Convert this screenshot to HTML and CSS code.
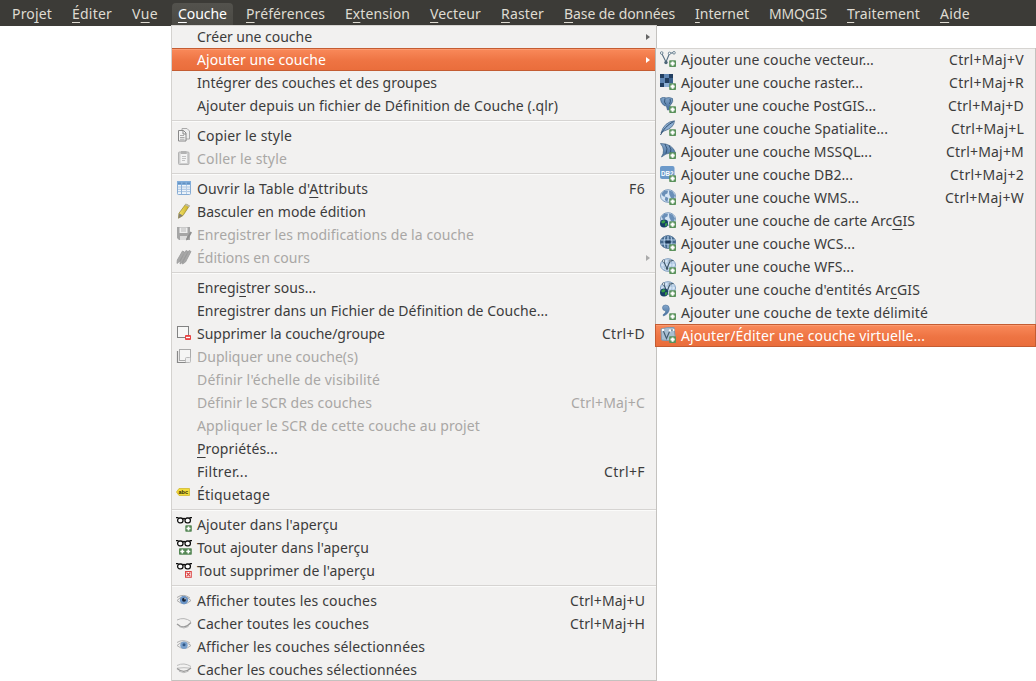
FILE: index.html
```html
<!DOCTYPE html>
<html lang="fr">
<head>
<meta charset="utf-8">
<title>QGIS</title>
<link rel="stylesheet" href="styles.css">
</head>
<body>
<svg class="defs" aria-hidden="true">
  <defs>
    <linearGradient id="blue" x1="0" y1="0" x2="0" y2="1"><stop offset="0" stop-color="#86a8cc"/><stop offset="1" stop-color="#426c9b"/></linearGradient>
    <linearGradient id="gold" x1="0" y1="0" x2="1" y2="0"><stop offset="0" stop-color="#f4e56a"/><stop offset="1" stop-color="#c9ac25"/></linearGradient>
    <g id="plus"><rect x="9.200" y="9.200" width="6.800" height="6.800" rx=".8" fill="#5b925c"/><path d="M12.600 10.500v4.200M10.500 12.600h4.200" stroke="#fff" stroke-width="2"/></g>
    <g id="globe"><ellipse cx="8" cy="7" rx="7.500" ry="6.300" fill="#d6e5f5" stroke="#7f9dbe"/></g>
    <g id="lands"><path d="M1.500 4.500l3-3 3.500.3-.6 2.700-2 .7L4.500 8 2.500 6.800zM9 1.500l3.500 1 2.500 4-1.500 3.500-2.500-1L9.300 5.500zM5.500 7.500l2.800 1.500-1 4-2.500-2z" fill="#6a8fb8"/></g>
    <g id="earth"><circle cx="4" cy="11.500" r="4" fill="#173f68"/><path d="M1 10l2.500-2 2 1-1 2-2 .5zM5 11.500l2.500-.5-1 3-1.500.5z" fill="#38a045"/></g>
    <g id="grid"><path d="M1 5h14M1 9h14M8 1v12M5 1.500q-2 5 0 11M11 1.500q2 5 0 11" fill="none" stroke="#9ebbd8" stroke-width=".8"/></g>
    <g id="vee"><path d="M3.500 3L7 10.500 10 3 13.500 2.500" fill="none" stroke="#3e5668" stroke-width="1.100"/><circle cx="3.500" cy="3" r="1.200" fill="#fff" stroke="#3e5668" stroke-width=".7"/><circle cx="10" cy="3" r="1" fill="#fff" stroke="#3e5668" stroke-width=".7"/><circle cx="7" cy="10.500" r="1.200" fill="#3e5668"/></g>
    <g id="glasses" fill="#fff" stroke="#111" stroke-width="1.300"><path d="M0 1.600h2.500M13.500 1.600H16" fill="none"/><rect x="1.600" y="2" width="5.400" height="4.800" rx="2.200"/><rect x="9" y="2" width="5.400" height="4.800" rx="2.200"/><path d="M6.500 3q1.500-1 3 0" fill="none"/></g>

    <symbol id="copy" viewBox="0 0 16 16"><path d="M6 1.500h5l2.500 2.500v8H6z" fill="#eee" stroke="#aaa"/><path d="M2.500 3.500h5l2.500 2.500v8H2.500z" fill="#f3f3f3" stroke="#888"/><path d="M7 3.500V7h3" fill="none" stroke="#888"/><path d="M4 8.500h4M4 10.500h4.500M4 12.200h4.500" stroke="#aaa"/></symbol>
    <symbol id="paste" viewBox="0 0 16 16"><rect x="2.500" y="2" width="10.500" height="12.500" rx="1" fill="#cfcfcf" stroke="#b3b3b3"/><path d="M4.500 4h6.500v9H4.500z" fill="#f3f3f3"/><path d="M5 1h5.500v3H5z" fill="#b3b3b3"/><path d="M6 6.500h4M6 8.500h4M6 10.500h3" stroke="#c2c2c2"/></symbol>
    <symbol id="table" viewBox="0 0 16 16"><rect x="1.500" y="1.500" width="13" height="13" rx=".8" fill="#eef4fa" stroke="#86acd4"/><path d="M1 1h14v4H1z" fill="#82aedb"/><path d="M2 3.200h3M6.500 3.200h3M11 3.200h3" stroke="#5583b5"/><path d="M2 7h12M2 9.300h12M2 11.600h12" stroke="#a9c4e1"/><path d="M5.500 5v9" stroke="#8fb2d8"/><path d="M10.500 5v9" stroke="#b5cce5"/></symbol>
    <symbol id="pencil" viewBox="0 0 16 16"><path d="M9.800 1l3.600 1.800L7 12.500l-4.500 2.700.5-5z" fill="url(#gold)" stroke="#94852e" stroke-width=".7"/><path d="M3 10.200l3.800 2.200-4.500 3z" fill="#858075"/><path d="M9.800.8l3.800 1.900-.9 1.400-3.800-2z" fill="#b9b9b2"/></symbol>
    <symbol id="save" viewBox="0 0 16 16"><path d="M1 1h13v13H3l-2-2z" fill="#a6a6a6"/><path d="M3.500 1.500h8v5.500h-8z" fill="#eee"/><path d="M4 10h7v4H4z" fill="#ddd"/><path d="M14.500 5.500l1.500 1-4 7-2 1 .2-2z" fill="#8e8e8e"/><path d="M5 3h5M5 5h5" stroke="#bbb"/></symbol>
    <symbol id="pencils" viewBox="0 0 16 16"><path d="M6.500 2l2 1-4.500 9-3 2.500.3-3.500zM10 1.500l2 1-5 10.500-3 2 .2-3.500zM13 1.500l2 1-5.500 10.500-3 2 .4-3z" fill="#a8a8a8" stroke="#999" stroke-width=".8"/></symbol>
    <symbol id="remove" viewBox="0 0 16 16"><rect x="1.500" y="1.500" width="11" height="11" fill="#f7f7f6" stroke="#828282"/><rect x="9" y="10" width="6" height="5" rx="1" fill="#e84343"/><path d="M10 12.500h4" stroke="#fff" stroke-width="1.300"/></symbol>
    <symbol id="duplicate" viewBox="0 0 16 16"><path d="M1.500 3v11.500H13" fill="none" stroke="#888" stroke-width="1.200"/><rect x="3.500" y="1.500" width="11" height="11" fill="#f5f5f4" stroke="#aaa"/><rect x="9.500" y="9.500" width="5" height="5" rx="1" fill="#eee" stroke="#bbb"/></symbol>
    <symbol id="label" viewBox="0 0 16 16"><path d="M.5 6L3 2.500h10.500V9.500H3z" fill="#f1dc3b" stroke="#d2b92f" stroke-width=".8"/><text x="2.500" y="8" class="abc">abc</text></symbol>
    <symbol id="ov-add" viewBox="0 0 16 16"><use href="#glasses"/><rect x="9.300" y="9.300" width="6.500" height="6.500" rx=".8" fill="#548654"/><path d="M12.500 10.500v4M10.500 12.500h4" stroke="#fff" stroke-width="1.700"/></symbol>
    <symbol id="ov-all" viewBox="0 0 16 16"><use href="#glasses"/><rect x="3" y="9.300" width="12.800" height="6.500" rx=".8" fill="#548654"/><path d="M6.300 10.500v4M4.300 12.500h4M12.300 10.500v4M10.300 12.500h4" stroke="#fff" stroke-width="1.600"/></symbol>
    <symbol id="ov-del" viewBox="0 0 16 16"><use href="#glasses"/><rect x="9.500" y="9.500" width="5.800" height="5.800" fill="#fff" stroke="#dc4646"/><path d="M10.500 10.500l3.800 3.800M14.300 10.500l-3.800 3.800" stroke="#dc4646" stroke-width="1.200"/></symbol>
    <symbol id="eye" viewBox="0 0 16 16"><path d="M1 8.500q6.500-7.500 14 0-7 6.500-14 0z" fill="#eee" stroke="#aaa"/><circle cx="8" cy="8" r="4.200" fill="#6c96c8"/><circle cx="8" cy="7.700" r="2" fill="#182335"/><circle cx="9" cy="6.700" r=".7" fill="#fff"/><path d="M1 5.500q6-4.500 13 .5" fill="none" stroke="#aaa"/></symbol>
    <symbol id="eye-sel" viewBox="0 0 16 16"><path d="M1 7.500q6.500-6.500 14 0-7 6-14 0z" fill="#eee" stroke="#b0b0b0"/><circle cx="8" cy="7.300" r="3.700" fill="#79a0cc"/><circle cx="8" cy="6.800" r="1.500" fill="#315989"/><path d="M1 4.500q6-4 13 .5" fill="none" stroke="#b0b0b0"/></symbol>
    <symbol id="closed" viewBox="0 0 16 16"><path d="M1 5q7-3.500 14 1.500" fill="none" stroke="#b5b5b5"/><path d="M1 9q7 6.500 14-1.500" fill="none" stroke="#999" stroke-width="1.200"/><path d="M3 11.500q5 3 9.500 0" fill="none" stroke="#bbb"/></symbol>
    <symbol id="closed-sel" viewBox="0 0 16 16"><path d="M1 4.500q7-3.500 14 1M1 7.200q7-1 14 0" fill="none" stroke="#bdbdbd"/><path d="M1 7.500q7 6 14-.5" fill="none" stroke="#999" stroke-width="1.200"/><path d="M3 10.200q5 3 9.500 0" fill="none" stroke="#bbb"/></symbol>

    <symbol id="vector" viewBox="0 0 16 16"><path d="M1.500 2L6 11 9.500 2.500 14 1.500" fill="none" stroke="#566f82" stroke-width="1.100"/><g fill="#fff" stroke="#566f82" stroke-width=".8"><circle cx="1.700" cy="2" r="1.300"/><circle cx="9.500" cy="2.300" r="1.200"/><circle cx="14" cy="1.800" r="1.300"/></g><circle cx="6" cy="11.500" r="1.700" fill="#4d6678"/><use href="#plus"/></symbol>
    <symbol id="raster" viewBox="0 0 16 16"><path d="M0 0h13v13H0z" fill="#6d98c7"/><path d="M0 0h4v4H0zM9 0h4v4H9zM0 9h4v4H0zM5 4h4v5H5z" fill="#223f61"/><path d="M4 0h5v4H4zM0 4h5v5H0z" fill="#6087b4"/><path d="M9 4h4v5H9z" fill="#3d638d"/><path d="M4 9h5v4H4z" fill="#8dafd4"/><use href="#plus"/></symbol>
    <symbol id="postgis" viewBox="0 0 16 16"><path d="M.5 1.500q3-2 5.500-.5 3-1 6.500.5 1 3-1.500 6L10 8v4.500l-2.500.5-1-4L4 8.500Q.5 6 .5 1.500z" fill="url(#blue)" stroke="#46698e" stroke-width=".8"/><path d="M5 1.500q-1.500 4 1 6M10 2q1 2-.5 5" fill="none" stroke="#365879"/><use href="#plus"/></symbol>
    <symbol id="feather" viewBox="0 0 16 16"><path d="M1 13Q4 2 14.500 .8 14 8 4 11z" fill="#8eafd3" stroke="#49698b" stroke-width=".8"/><path d="M.5 15Q4 7 13.500 1.500" fill="none" stroke="#2e4c6d"/><use href="#plus"/></symbol>
    <symbol id="mssql" viewBox="0 0 16 16"><path d="M.5 .5q12 0 15 9.500l-5 0Q6 10 1.500 14 6 7 .5.5z" fill="url(#blue)" stroke="#3c5e80" stroke-width=".7"/><path d="M5 1q3.500 5 1 9.500M9 2.500q3 3.500 1.500 7.500" fill="none" stroke="#294969" stroke-width=".8"/><use href="#plus"/></symbol>
    <symbol id="db2" viewBox="0 0 16 16"><rect width="14.500" height="13" rx="2" fill="#6d9aca"/><text x="1" y="9.500" class="db2" textLength="12.500" lengthAdjust="spacingAndGlyphs">DB2</text><use href="#plus"/></symbol>
    <symbol id="wms" viewBox="0 0 16 16"><use href="#globe"/><use href="#lands"/><use href="#plus"/></symbol>
    <symbol id="arcmap" viewBox="0 0 16 16"><use href="#globe"/><use href="#lands"/><use href="#earth"/><use href="#plus"/></symbol>
    <symbol id="wcs" viewBox="0 0 16 16"><ellipse cx="8" cy="7" rx="7.500" ry="6.300" fill="#45698e" stroke="#45698e"/><path d="M1 5h14M1 9h14M8 1v12" stroke="#b4cfe9" stroke-width="1.200"/><path d="M5 1.500q-2 5 0 11M11 1.500q2 5 0 11" fill="none" stroke="#b4cfe9"/><path d="M5.500 5.500h5v3h-5z" fill="#1c3857"/><use href="#plus"/></symbol>
    <symbol id="wfs" viewBox="0 0 16 16"><use href="#globe"/><use href="#grid"/><use href="#vee"/><use href="#plus"/></symbol>
    <symbol id="arcfeat" viewBox="0 0 16 16"><use href="#globe"/><use href="#grid"/><use href="#vee"/><use href="#earth"/><use href="#plus"/></symbol>
    <symbol id="comma" viewBox="0 0 16 16"><path d="M2.500 3.800Q2.500 1 5.700 1 9.300 1 9.300 4.800 9.300 9.500 3.500 12L3 10.800Q6 9 5.800 6.800 2.500 6.800 2.500 3.800z" fill="url(#blue)" stroke="#4a719b" stroke-width=".6"/><use href="#plus"/></symbol>
    <symbol id="virtual" viewBox="0 0 16 16"><path d="M1 2q5-2 13-1.500l1.500 12Q8 14.500 1.500 13z" fill="#a9bfd3" stroke="#8099ae"/><path d="M3 3l3.500 8.500L10 3.500 13.500 3" fill="none" stroke="#425a6d" stroke-width="1.100"/><g fill="#fff"><circle cx="3" cy="3" r="1.200"/><circle cx="10" cy="3.500" r="1.200"/><circle cx="13.500" cy="3" r="1"/></g><use href="#plus"/></symbol>
  </defs>
</svg>

<nav class="menubar">
  <span class="top"><span data-w="40">Pro<u>j</u>et</span></span>
  <span class="top"><span data-w="40"><u>É</u>diter</span></span>
  <span class="top"><span data-w="26">V<u>u</u>e</span></span>
  <span class="top open"><span data-w="49"><u>C</u>ouche</span></span>
  <span class="top"><span data-w="79"><u>P</u>références</span></span>
  <span class="top"><span data-w="65">E<u>x</u>tension</span></span>
  <span class="top"><span data-w="51"><u>V</u>ecteur</span></span>
  <span class="top"><span data-w="43"><u>R</u>aster</span></span>
  <span class="top"><span data-w="111"><u>B</u>ase de données</span></span>
  <span class="top"><span data-w="54"><u>I</u>nternet</span></span>
  <span class="top"><span data-w="58">MMQGIS</span></span>
  <span class="top"><span data-w="73"><u>T</u>raitement</span></span>
  <span class="top"><span data-w="30"><u>A</u>ide</span></span>
</nav>

<main class="desk">
  <section class="menu">
    <div class="row"><i class="ico"></i><span data-w="115">Créer une couche</span><b class="arrow"></b></div>
    <div class="row active"><i class="ico"></i><span data-w="129">Ajouter une couche</span><b class="arrow"></b></div>
    <div class="row"><i class="ico"></i><span data-w="240">Intégrer des couches et des groupes</span></div>
    <div class="row"><i class="ico"></i><span data-w="361">Ajouter depuis un fichier de Définition de Couche (.qlr)</span></div>
    <hr class="sep">
    <div class="row"><svg class="ico"><use href="#copy"/></svg><span data-w="95">Copier le style</span></div>
    <div class="row off"><svg class="ico"><use href="#paste"/></svg><span data-w="90">Coller le style</span></div>
    <hr class="sep">
    <div class="row"><svg class="ico"><use href="#table"/></svg><span data-w="171">Ouvrir la Table d'<u>A</u>ttributs</span><kbd class="key" data-w="16">F6</kbd></div>
    <div class="row"><svg class="ico"><use href="#pencil"/></svg><span data-w="169">Basculer en mode édition</span></div>
    <div class="row off"><svg class="ico"><use href="#save"/></svg><span data-w="277">Enregistrer les modifications de la couche</span></div>
    <div class="row off"><svg class="ico"><use href="#pencils"/></svg><span data-w="113">Éditions en cours</span><b class="arrow"></b></div>
    <hr class="sep">
    <div class="row"><i class="ico"></i><span data-w="119">Enregi<u>s</u>trer sous...</span></div>
    <div class="row"><i class="ico"></i><span data-w="351">Enregistrer dans un Fichier de Définition de Couche...</span></div>
    <div class="row"><svg class="ico"><use href="#remove"/></svg><span data-w="188">Supprimer la couche/groupe</span><kbd class="key" data-w="43">Ctrl+D</kbd></div>
    <div class="row off"><svg class="ico"><use href="#duplicate"/></svg><span data-w="161">Dupliquer une couche(s)</span></div>
    <div class="row off"><i class="ico"></i><span data-w="183">Définir l'échelle de visibilité</span></div>
    <div class="row off"><i class="ico"></i><span data-w="175">Définir le SCR des couches</span><kbd class="key" data-w="74">Ctrl+Maj+C</kbd></div>
    <div class="row off"><i class="ico"></i><span data-w="283">Appliquer le SCR de cette couche au projet</span></div>
    <div class="row"><i class="ico"></i><span data-w="81"><u>P</u>ropriétés...</span></div>
    <div class="row"><i class="ico"></i><span data-w="51">Filtrer...</span><kbd class="key" data-w="41">Ctrl+F</kbd></div>
    <div class="row"><svg class="ico"><use href="#label"/></svg><span data-w="73">Étiquetage</span></div>
    <hr class="sep">
    <div class="row"><svg class="ico"><use href="#ov-add"/></svg><span data-w="141">Ajouter dans l'aperçu</span></div>
    <div class="row"><svg class="ico"><use href="#ov-all"/></svg><span data-w="172">Tout ajouter dans l'aperçu</span></div>
    <div class="row"><svg class="ico"><use href="#ov-del"/></svg><span data-w="178">Tout supprimer de l'aperçu</span></div>
    <hr class="sep">
    <div class="row"><svg class="ico"><use href="#eye"/></svg><span data-w="180">Afficher toutes les couches</span><kbd class="key" data-w="75">Ctrl+Maj+U</kbd></div>
    <div class="row"><svg class="ico"><use href="#closed"/></svg><span data-w="172">Cacher toutes les couches</span><kbd class="key" data-w="75">Ctrl+Maj+H</kbd></div>
    <div class="row"><svg class="ico"><use href="#eye-sel"/></svg><span data-w="228">Afficher les couches sélectionnées</span></div>
    <div class="row"><svg class="ico"><use href="#closed-sel"/></svg><span data-w="220">Cacher les couches sélectionnées</span></div>
  </section>

  <section class="menu submenu">
    <div class="row"><svg class="ico"><use href="#vector"/></svg><span data-w="193">Ajouter une couche vecteur...</span><kbd class="key" data-w="75">Ctrl+Maj+V</kbd></div>
    <div class="row"><svg class="ico"><use href="#raster"/></svg><span data-w="182">Ajouter une couche raster...</span><kbd class="key" data-w="75">Ctrl+Maj+R</kbd></div>
    <div class="row"><svg class="ico"><use href="#postgis"/></svg><span data-w="195">Ajouter une couche PostGIS...</span><kbd class="key" data-w="76">Ctrl+Maj+D</kbd></div>
    <div class="row"><svg class="ico"><use href="#feather"/></svg><span data-w="207">Ajouter une couche Spatialite...</span><kbd class="key" data-w="73">Ctrl+Maj+L</kbd></div>
    <div class="row"><svg class="ico"><use href="#mssql"/></svg><span data-w="191">Ajouter une couche MSSQL...</span><kbd class="key" data-w="78">Ctrl+Maj+M</kbd></div>
    <div class="row"><svg class="ico"><use href="#db2"/></svg><span data-w="172">Ajouter une couche DB2...</span><kbd class="key" data-w="74">Ctrl+Maj+2</kbd></div>
    <div class="row"><svg class="ico"><use href="#wms"/></svg><span data-w="178">Ajouter une couche WMS...</span><kbd class="key" data-w="79">Ctrl+Maj+W</kbd></div>
    <div class="row"><svg class="ico"><use href="#arcmap"/></svg><span data-w="234">Ajouter une couche de carte Arc<u>G</u>IS</span></div>
    <div class="row"><svg class="ico"><use href="#wcs"/></svg><span data-w="174">Ajouter une couche WCS...</span></div>
    <div class="row"><svg class="ico"><use href="#wfs"/></svg><span data-w="173">Ajouter une couche WFS...</span></div>
    <div class="row"><svg class="ico"><use href="#arcfeat"/></svg><span data-w="239">Ajouter une couche d'entités Ar<u>c</u>GIS</span></div>
    <div class="row"><svg class="ico"><use href="#comma"/></svg><span data-w="247">Ajouter une couche de texte délimité</span></div>
    <div class="row active"><svg class="ico"><use href="#virtual"/></svg><span data-w="244">Ajouter/Éditer une couche virtuelle...</span></div>
  </section>
</main>
<script src="fit.js"></script>
</body>
</html>
```
FILE: styles.css
```css
* { box-sizing: border-box; }

body {
  margin: 0;
  width: 1036px;
  height: 681px;
  overflow: hidden;
  background: #fff;
  color: #3c3c3c;
  font: 14px/23px "Noto Sans", "Open Sans", sans-serif;
  white-space: nowrap;
}

.defs { position: absolute; width: 0; height: 0; }

u {
  text-decoration: underline 1px;
  text-underline-offset: 3px;
  text-decoration-skip-ink: none;
}

.menubar {
  display: flex;
  height: 26px;
  padding: 3px 0 0 2px;
  background: #3c3b37;
  color: #dfdbd2;
}

.top {
  height: 23px;
  padding: 0 10px;
  line-height: 22px;
}

.top.open {
  margin: 0 3px 0 4px;
  padding: 0 6px;
  border-radius: 4px 4px 0 0;
  background: linear-gradient(#53524d, #4a4944);
  color: #fff;
}

.desk {
  position: relative;
  display: flex;
  align-items: flex-start;
  margin-top: -1px;
  height: 656px;
}

.menu {
  width: 486px;
  margin-left: 171px;
  background: #f2f1f0;
  border: solid #c4c2bf;
  border-width: 0 1px;
  border-left-color: #d4d2cf;
  box-shadow: inset 0 1px #d6d4d1, inset 0 -1px #c4c2bf;
}

.submenu {
  position: relative;
  width: 381px;
  margin: 23px 0 0 -2px;
  border-left-color: #b9b7b4;
}

.row {
  display: flex;
  align-items: center;
  height: 23px;
  padding: 0 11px 0 4px;
}

.row.active {
  background: linear-gradient(#fa8b5c, #ee7443 55%, #e96d3b);
  color: #fff;
  box-shadow: inset 0 1px #c45c32, inset 0 -1px #c45c32, inset 0 2px #fb9a70;
}

.submenu .active {
  margin: 0 -1px;
  border: solid #c45c32;
  border-width: 0 1px;
}

.row.off { color: #a9a7a5; }

.ico {
  flex: none;
  width: 16px;
  height: 16px;
  margin: 0 5px 1px 0;
}

.key {
  margin-left: auto;
  font: inherit;
}

.arrow {
  margin: 0 -5px 0 auto;
  border: solid transparent;
  border-width: 3px 0 3px 4px;
  border-left-color: #656565;
}

.active .arrow { border-left-color: #fff; }
.off .arrow { border-left-color: #aaa; }

.sep {
  height: 7px;
  margin: 0;
  border: solid transparent;
  border-width: 3px 0 2px;
  background: linear-gradient(#d6d4d2 50%, #fbfbfa 50%) padding-box;
}

.abc { font: bold 5.5px "Liberation Sans", sans-serif; fill: #2f2904; }
.db2 { font: bold 7.5px "Liberation Sans", sans-serif; fill: #fff; }
```
FILE: fit.js
```js
document.querySelectorAll("[data-w]").forEach(function (el) {
  var extra = Number(el.dataset.w) - el.getBoundingClientRect().width;
  el.style.letterSpacing = extra / el.textContent.length + "px";
});
```
